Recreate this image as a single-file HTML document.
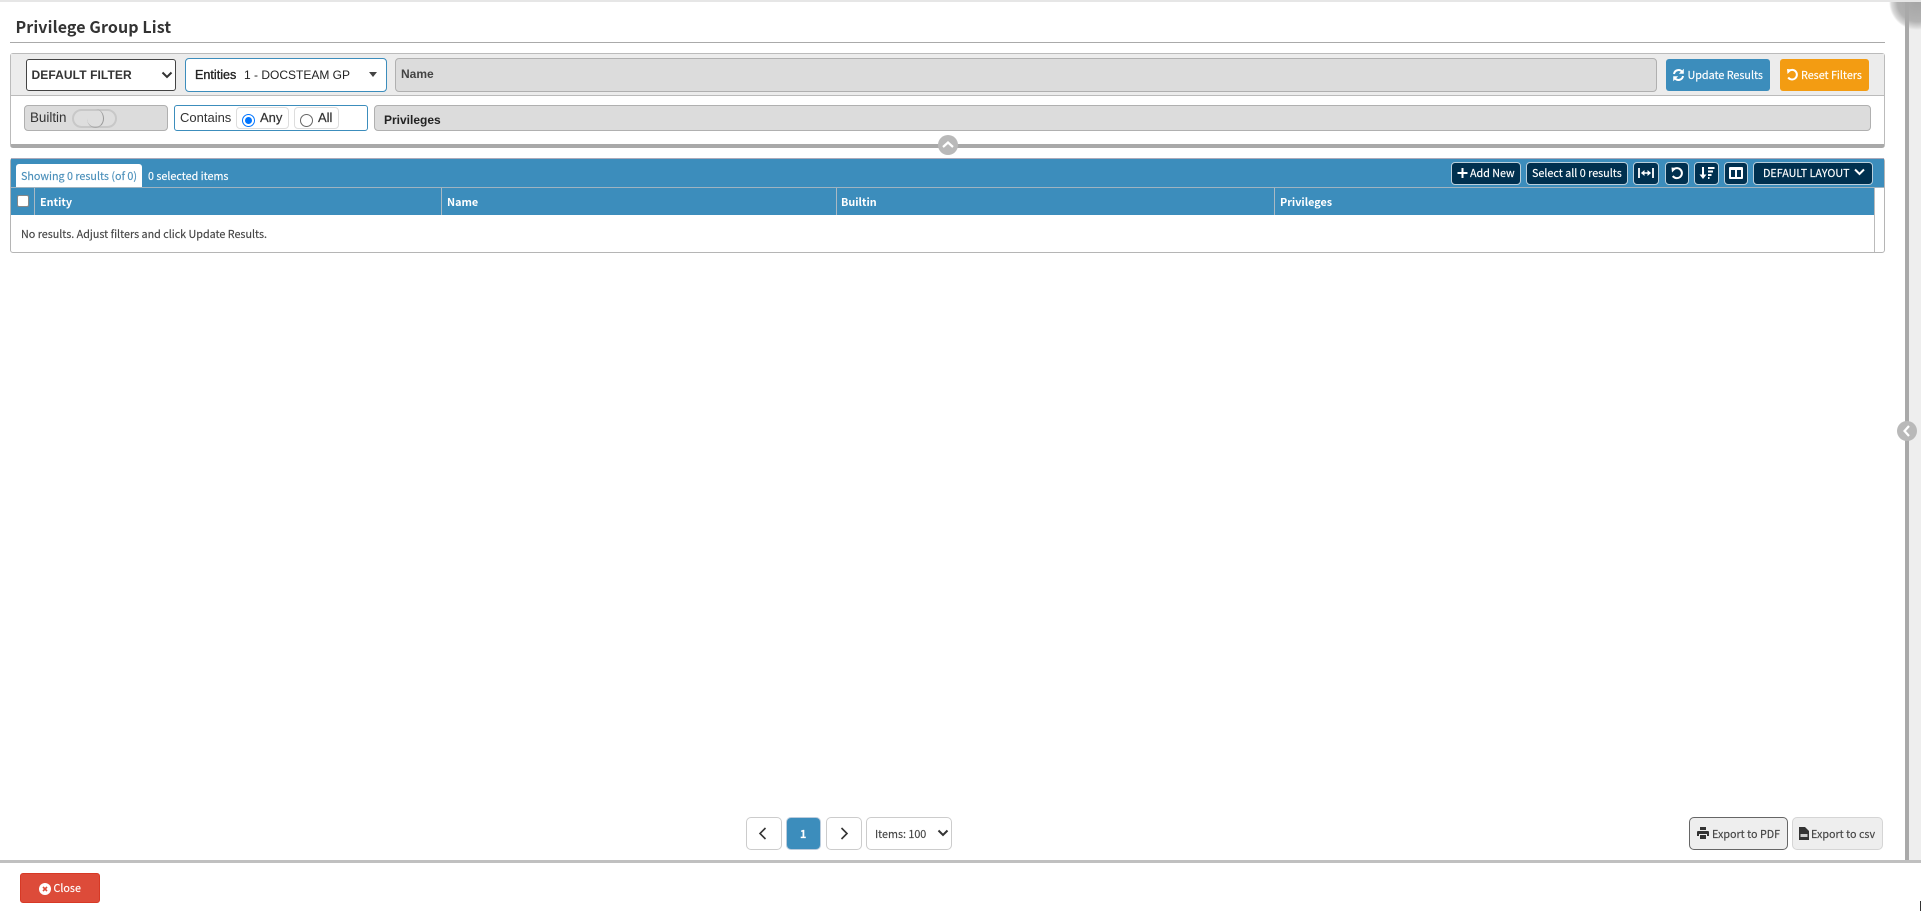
<!DOCTYPE html>
<html><head><meta charset="utf-8"><title>Privilege Group List</title>
<style>
html,body{margin:0;padding:0;background:#fff;width:1921px;height:911px;overflow:hidden}
body{position:relative;font-family:"Noto Sans CJK JP","Liberation Sans",sans-serif;color:#333}
div,span,svg{position:absolute;box-sizing:border-box}
.t{white-space:nowrap}
.l{font-family:"Liberation Sans",sans-serif}
.b{background:#00304f;border:1px solid #b9cfdc;border-radius:4px;color:#fff;height:23px;top:162px}
.th{color:#fff;font-size:10.8px;font-weight:700;line-height:16px;top:194px;white-space:nowrap}
.v{top:188px;height:27px;width:1px;background:#a9b9c4}
.pg{top:817px;height:33px;border:1px solid #ccc;border-radius:5px;background:#fff}
.s{font-size:10.75px;line-height:18px;-webkit-text-stroke:.15px currentColor}
</style></head><body>
<div style="left:0;top:0;width:1921px;height:2px;background:#e6e6e6"></div>
<div style="left:1909px;top:2px;width:12px;height:858px;background:#eee"></div>
<div style="left:1889px;top:-26px;width:56px;height:56px;border-radius:50%;background:radial-gradient(circle closest-side,#a5a5a5 0,#b2b2b2 70%,#dcdcdc 92%,rgba(255,255,255,0) 100%)"></div>
<div style="left:0;top:0;width:1921px;height:2px;background:#e6e6e6"></div>
<div style="left:1905px;top:2px;width:4px;height:858px;background:#a9a9a9"></div>
<div style="left:1897px;top:421px;width:20px;height:20px;border-radius:50%;background:#b9b9b9"></div>
<svg style="left:1897px;top:421px" width="20" height="20" viewBox="0 0 20 20"><path d="M12 5 L7.5 10 L12 15" fill="none" stroke="#fff" stroke-width="2.2"/></svg>

<div class="t" style="left:15.5px;top:14px;font-size:16px;font-weight:700;line-height:24px;color:#333;letter-spacing:.1px">Privilege Group List</div>
<div style="left:10px;top:42px;width:1875px;height:1px;background:#aaa"></div>

<!-- filter panel -->
<div style="left:10px;top:53px;width:1875px;height:95px;border:1px solid #bbb;border-bottom:4px solid #a9a9a9;border-radius:3px;background:#fff"></div>
<div style="left:11px;top:54px;width:1873px;height:42px;background:#ececec;border-bottom:1px solid #bbb"></div>

<div style="left:26px;top:59px;width:150px;height:32px;background:#fff;border:1px solid #444;border-radius:3px"></div>
<div class="t l" style="left:31.5px;top:67px;font-size:12px;font-weight:700;line-height:16px;letter-spacing:.1px;color:#333">DEFAULT FILTER</div>
<svg style="left:161px;top:71px" width="12" height="8" viewBox="0 0 12 8"><path d="M1.5 1.5 L6 6 L10.5 1.5" fill="none" stroke="#333" stroke-width="2"/></svg>

<div style="left:185px;top:58px;width:202px;height:34px;background:#fff;border:1px solid #3c8dbc;border-radius:4px"></div>
<div class="t l" style="left:195px;top:67px;font-size:12.6px;line-height:16px;color:#222;-webkit-text-stroke:.35px #222">Entities</div>
<div class="t l" style="left:244px;top:67px;font-size:12px;line-height:16px;color:#222">1 - DOCSTEAM GP</div>
<svg style="left:369px;top:72px" width="8" height="5" viewBox="0 0 8 5"><path d="M0 0 H8 L4 5 Z" fill="#444"/></svg>

<div style="left:395px;top:58px;width:1262px;height:34px;background:#dcdcdc;border:1px solid #b0b0b0;border-radius:4px"></div>
<div class="t l" style="left:401px;top:66px;font-size:12px;font-weight:700;line-height:16px;color:#444">Name</div>

<div style="left:1666px;top:59px;width:104px;height:32px;background:#3c8dbc;border-radius:3px"></div>
<svg style="left:1672px;top:68px" width="13" height="14" viewBox="0 0 13 14"><path d="M2 6 A4.6 4.6 0 0 1 10 3.6 M11 8 A4.6 4.6 0 0 1 3 10.4" fill="none" stroke="#fff" stroke-width="2"/><path d="M11.8 .8 V5.8 H6.8 Z M1.2 13.2 V8.2 H6.2 Z" fill="#fff"/></svg>
<div class="t s" style="left:1687.5px;top:67px;color:#fff">Update Results</div>

<div style="left:1780px;top:59px;width:89px;height:32px;background:#f39c12;border-radius:3px"></div>
<svg style="left:1786px;top:68px" width="13" height="14" viewBox="0 0 13 14"><path d="M3 3 A4.8 4.8 0 1 1 2.2 9.5" fill="none" stroke="#fff" stroke-width="2"/><path d="M1 1 L6 1.5 L1.5 6 Z" fill="#fff"/></svg>
<div class="t s" style="left:1801px;top:67px;color:#fff">Reset Filters</div>

<!-- row 2 -->
<div style="left:24px;top:105px;width:144px;height:26px;background:#dcdcdc;border:1px solid #b0b0b0;border-radius:4px"></div>
<div class="t l" style="left:30px;top:110px;font-size:13.4px;line-height:16px;color:#333">Builtin</div>
<div style="left:72px;top:109px;width:45px;height:19px;border:2px solid #c8c8c8;border-radius:10px;background:#dedede"></div>
<div style="left:87px;top:109px;width:17px;height:19px;border-radius:50%;border-right:1.5px solid #999;border-bottom:1px solid #aaa;border-top:0;border-left:0;background:transparent"></div>

<div style="left:174px;top:105px;width:194px;height:26px;background:#fff;border:1px solid #3c8dbc;border-radius:3px"></div>
<div class="t l" style="left:180px;top:110px;font-size:13px;line-height:16px;color:#333">Contains</div>
<div style="left:236px;top:107px;width:53px;height:22px;background:#fff;border:1px solid #ddd;border-radius:4px"></div>
<div style="left:294px;top:107px;width:45px;height:22px;background:#fff;border:1px solid #ddd;border-radius:4px"></div>
<div style="left:242px;top:114px;width:13px;height:13px;border:1.5px solid #0075ff;border-radius:50%;background:#fff"></div>
<div style="left:245px;top:117px;width:7px;height:7px;border-radius:50%;background:#0075ff"></div>
<div class="t l" style="left:260px;top:110px;font-size:13px;line-height:16px;color:#333;-webkit-text-stroke:.2px #333">Any</div>
<div style="left:300px;top:114px;width:13px;height:13px;border:1px solid #666;border-radius:50%;background:#fff"></div>
<div class="t l" style="left:318px;top:110px;font-size:13px;line-height:16px;color:#333;-webkit-text-stroke:.2px #333">All</div>

<div style="left:374px;top:105px;width:1497px;height:26px;background:#dcdcdc;border:1px solid #b0b0b0;border-radius:4px"></div>
<div class="t l" style="left:384px;top:111.5px;font-size:12px;font-weight:700;line-height:16px;color:#222">Privileges</div>

<div style="left:938px;top:135px;width:20px;height:20px;border-radius:50%;background:#b9b9b9"></div>
<svg style="left:938px;top:135px" width="20" height="20" viewBox="0 0 20 20"><path d="M5 12 L10 7.5 L15 12" fill="none" stroke="#fff" stroke-width="2.2"/></svg>

<!-- table -->
<div style="left:10px;top:158px;width:1875px;height:95px;border:1px solid #b5b5b5;border-radius:3px;background:#fff"></div>
<div style="left:11px;top:158px;width:1873px;height:29px;background:#3c8dbc;border-top:1px solid #aab"></div>
<div style="left:11px;top:187px;width:1873px;height:1px;background:#9fb3c0"></div>
<div style="left:11px;top:188px;width:1863px;height:27px;background:#3c8dbc"></div>
<div style="left:1874px;top:188px;width:1px;height:64px;background:#bbb"></div>
<div style="left:16px;top:164px;width:126px;height:23px;background:#fff;border-radius:3px 3px 0 0"></div>
<div class="t s" style="left:21px;top:168px;color:#4a8fba">Showing 0 results (of 0)</div>
<div class="t s" style="left:148px;top:168px;color:#fff">0 selected items</div>

<div style="left:16.5px;top:194.5px;width:12px;height:12px;background:#fff;border:1px solid #888;border-radius:2px"></div>
<div class="v" style="left:34px"></div>
<div class="v" style="left:441px"></div>
<div class="v" style="left:836px"></div>
<div class="v" style="left:1274px"></div>
<div class="th" style="left:40px">Entity</div>
<div class="th" style="left:447px">Name</div>
<div class="th" style="left:841px">Builtin</div>
<div class="th" style="left:1280px">Privileges</div>
<div class="t s" style="left:21px;top:226px;color:#444">No results. Adjust filters and click Update Results.</div>

<!-- toolbar -->
<div class="b" style="left:1451px;width:70px"></div>
<svg style="left:1457px;top:167px" width="11" height="12" viewBox="0 0 11 12"><path d="M5.5 1 V11 M.5 6 H10.5" stroke="#fff" stroke-width="2"/></svg>
<div class="t s" style="left:1470px;top:165px;color:#fff">Add New</div>
<div class="b" style="left:1526px;width:102px"></div>
<div class="t s" style="left:1532px;top:165px;color:#fff">Select all 0 results</div>
<div class="b" style="left:1633px;width:26px"></div>
<svg style="left:1638px;top:167px" width="16" height="12" viewBox="0 0 16 12"><path d="M1 1 V11 M15 1 V11" stroke="#fff" stroke-width="1.8"/><path d="M3.5 6 H12.5" stroke="#fff" stroke-width="1.5"/><path d="M3 6 L6.5 3 V9 Z M13 6 L9.5 3 V9 Z" fill="#fff"/></svg>
<div class="b" style="left:1665px;width:24px"></div>
<svg style="left:1670px;top:166px" width="14" height="14" viewBox="0 0 14 14"><path d="M3.5 3.5 A5 5 0 1 1 2.8 10" fill="none" stroke="#fff" stroke-width="2"/><path d="M1.5 1.5 L6.5 2 L2 6.5 Z" fill="#fff"/></svg>
<div class="b" style="left:1694px;width:25px"></div>
<svg style="left:1699px;top:166px" width="16" height="14" viewBox="0 0 16 14"><path d="M4 1 V11" stroke="#fff" stroke-width="2"/><path d="M.5 8.5 H7.5 L4 13 Z" fill="#fff"/><path d="M9 2 H15.5 M9 5.5 H14 M9 9 H12.5 M9 12 H10.5" stroke="#fff" stroke-width="2"/></svg>
<div class="b" style="left:1724px;width:24px"></div>
<svg style="left:1729px;top:167px" width="14" height="12" viewBox="0 0 14 12"><path d="M1 0 H13 A1 1 0 0 1 14 1 V11 A1 1 0 0 1 13 12 H1 A1 1 0 0 1 0 11 V1 A1 1 0 0 1 1 0 Z M2 3 V10 H6 V3 Z M8 3 V10 H12 V3 Z" fill="#fff" fill-rule="evenodd"/></svg>
<div class="b" style="left:1753px;width:120px"></div>
<div class="t s" style="left:1763px;top:165px;color:#fff">DEFAULT LAYOUT</div>
<svg style="left:1854px;top:168px" width="11" height="8" viewBox="0 0 11 8"><path d="M1 1.5 L5.5 6 L10 1.5" fill="none" stroke="#fff" stroke-width="2"/></svg>

<!-- pagination -->
<div class="pg" style="left:746px;width:36px"></div>
<svg style="left:758px;top:827px" width="10" height="13" viewBox="0 0 10 13"><path d="M7.5 1 L2 6.5 L7.5 12" fill="none" stroke="#333" stroke-width="1.6"/></svg>
<div class="pg" style="left:786px;width:35px;background:#3c8dbc;border-color:#bcd"></div>
<div class="t s" style="left:800px;top:826px;font-weight:700;color:#fff">1</div>
<div class="pg" style="left:826px;width:36px"></div>
<svg style="left:839px;top:827px" width="10" height="13" viewBox="0 0 10 13"><path d="M2.5 1 L8 6.5 L2.5 12" fill="none" stroke="#333" stroke-width="1.6"/></svg>
<div class="pg" style="left:866px;width:86px"></div>
<div class="t s" style="left:875px;top:826px;color:#444">Items: 100</div>
<svg style="left:937px;top:829px" width="12" height="8" viewBox="0 0 12 8"><path d="M1.5 1.5 L6 6 L10.5 1.5" fill="none" stroke="#333" stroke-width="2"/></svg>

<!-- exports -->
<div class="pg" style="left:1689px;width:99px;background:#eee;border-color:#666"></div>
<svg style="left:1697px;top:827px" width="12" height="13" viewBox="0 0 12 13"><path d="M3 0 H9 V3 H3 Z M1 4 H11 A1 1 0 0 1 12 5 V9 H10 V7 H2 V9 H0 V5 A1 1 0 0 1 1 4 Z M3 8 H9 V12 H3 Z" fill="#333"/></svg>
<div class="t s" style="left:1712px;top:826px;color:#444">Export to PDF</div>
<div class="pg" style="left:1792px;width:91px;background:#eee;border-color:#d5d5d5"></div>
<svg style="left:1799px;top:827px" width="10" height="13" viewBox="0 0 10 13"><path d="M0 0 H6 L10 4 V13 H0 Z" fill="#333"/><path d="M1.5 7 H8.5 V10 H1.5 Z" fill="#ccc"/></svg>
<div class="t s" style="left:1811px;top:826px;color:#444">Export to csv</div>

<!-- footer -->
<div style="left:0;top:860px;width:1921px;height:3px;background:#c0c0c0"></div>
<div style="left:20px;top:873px;width:80px;height:30px;background:#dd4b39;border:1px solid #d73925;border-radius:3px"></div>
<div style="left:39px;top:883px;width:12px;height:12px;border-radius:50%;background:#fff"></div>
<svg style="left:39px;top:883px" width="12" height="12" viewBox="0 0 12 12"><path d="M4 4 L8 8 M8 4 L4 8" stroke="#dd4b39" stroke-width="1.6"/></svg>
<div class="t s" style="left:53.5px;top:880px;color:#fff">Close</div>
<div style="left:1920px;top:901px;width:1px;height:10px;background:#333"></div>
</body></html>
